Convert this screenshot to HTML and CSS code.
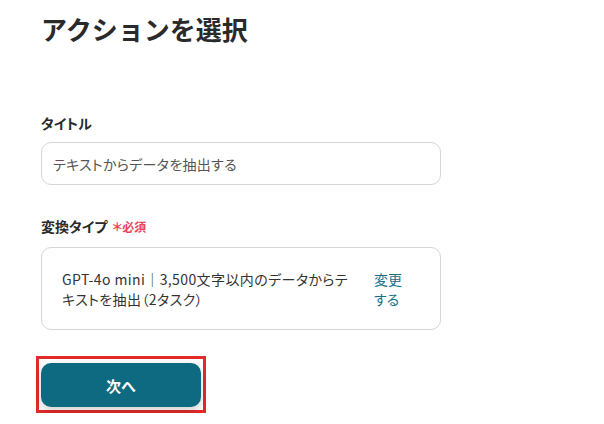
FILE: index.html
```html
<!DOCTYPE html>
<html lang="ja">
<head>
<meta charset="utf-8">
<link rel="stylesheet" href="styles.css">
</head>
<body>
<div class="page">
  <h1 class="title">アクションを選択</h1>
  <div class="field field-title">
    <div class="label">タイトル</div>
    <div class="input">テキストからデータを抽出する</div>
  </div>
  <div class="field field-type">
    <div class="label">変換タイプ <span class="req">＊必須</span></div>
    <div class="card">
      <div class="card-text">GPT-4o mini｜3,500文字以内のデータからテキストを抽出（2タスク）</div>
      <a class="change">変更する</a>
    </div>
  </div>
  <div class="actions">
    <div class="highlight">
      <button class="next">次へ</button>
    </div>
  </div>
</div>
</body>
</html>
```
FILE: styles.css
```css
html, body {
  margin: 0;
  padding: 0;
  background: #ffffff;
}
body {
  font-family: "Noto Sans CJK JP", "Noto Sans", sans-serif;
  color: #333333;
  font-feature-settings: "palt";
}
.page {
  padding: 0 0 0 41px;
  width: 400px;
}
.title {
  margin: 0;
  padding-top: 9px;
  font-size: 26px;
  line-height: 40px;
  font-weight: 700;
  color: #2a2a2a;
  font-feature-settings: normal;
}
.field-title {
  margin-top: 64px;
}
.label {
  font-size: 14px;
  font-weight: 700;
  line-height: 20px;
  color: #2a2a2a;
}
.req {
  color: #e9445a;
  font-size: 12px;
  font-weight: 700;
  margin-left: 2px;
}
.input {
  margin-top: 9px;
  box-sizing: border-box;
  height: 43px;
  border: 1px solid #d6d6d6;
  border-radius: 10px;
  padding: 0 11px;
  display: flex;
  align-items: center;
  font-size: 14px;
  letter-spacing: 0.3px;
  color: #555555;
}
.field-type {
  margin-top: 31px;
}
.card {
  margin-top: 10px;
  box-sizing: border-box;
  height: 83px;
  border: 1px solid #d6d6d6;
  border-radius: 10px;
  padding: 0 0 0 20px;
  display: flex;
  align-items: center;
  gap: 16px;
  font-size: 14px;
  line-height: 20px;
  color: #333333;
}
.card-text {
  flex: 0 0 296px;
  letter-spacing: 0.4px;
}
.change {
  width: 30px;
  color: #19708a;
  cursor: pointer;
}
.actions {
  margin-top: 26px;
  margin-left: -5px;
}
.highlight {
  display: inline-block;
  border: 3px solid #e32a2a;
  padding: 4px 2px 3px 2px;
}
.next {
  display: block;
  width: 160px;
  height: 44px;
  border: none;
  border-radius: 10px;
  background: #0e6a80;
  color: #ffffff;
  font-family: "Noto Sans CJK JP", sans-serif;
  font-size: 15px;
  font-weight: 700;
  box-shadow: 0 4px 10px rgba(0, 0, 0, 0.18);
}
```
